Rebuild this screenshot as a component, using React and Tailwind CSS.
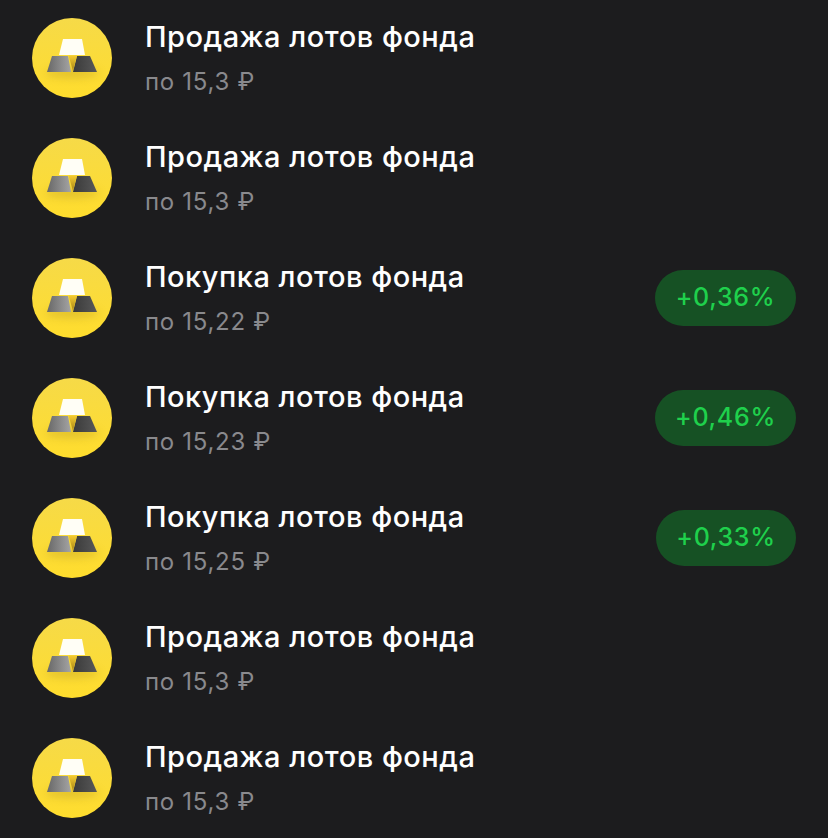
const rows = [
  { title: "Продажа лотов фонда", price: "по 15,3 ₽" },
  { title: "Продажа лотов фонда", price: "по 15,3 ₽" },
  { title: "Покупка лотов фонда", price: "по 15,22 ₽", badge: "+0,36%" },
  { title: "Покупка лотов фонда", price: "по 15,23 ₽", badge: "+0,46%" },
  { title: "Покупка лотов фонда", price: "по 15,25 ₽", badge: "+0,33%", narrow: true },
  { title: "Продажа лотов фонда", price: "по 15,3 ₽" },
  { title: "Продажа лотов фонда", price: "по 15,3 ₽" },
];

const GoldIcon = () => (
  <svg width="80" height="80" viewBox="0 0 80 80" className="shrink-0">
    <defs>
      <linearGradient id="coin" x1="0" y1="0" x2="0" y2="1">
        <stop offset="0" stopColor="#f6da48" />
        <stop offset="1" stopColor="#ffdd2d" />
      </linearGradient>
      <linearGradient id="barLeft" x1="0" y1="0" x2="1" y2="0">
        <stop offset="0" stopColor="#686868" />
        <stop offset="1" stopColor="#a4a4a4" />
      </linearGradient>
      <linearGradient id="barRight" x1="0" y1="0" x2="1" y2="0">
        <stop offset="0" stopColor="#3a3a3a" />
        <stop offset="1" stopColor="#585858" />
      </linearGradient>
      <linearGradient id="pin" x1="0" y1="0" x2="0" y2="1">
        <stop offset="0" stopColor="#f6cc30" />
        <stop offset="1" stopColor="#a58518" />
      </linearGradient>
      <filter id="soft" x="-30%" y="-80%" width="160%" height="260%">
        <feGaussianBlur stdDeviation="4" />
      </filter>
    </defs>
    <circle cx="40" cy="40" r="40" fill="url(#coin)" />
    <ellipse cx="40" cy="55" rx="27" ry="5" fill="#b8951a" opacity="0.4" filter="url(#soft)" />
    <path d="M31 21H50L53 37H27Z" fill="#fffef6" />
    <path d="M20 38H36L39 54H15Z" fill="url(#barLeft)" />
    <path d="M45 38H58L65 54H41Z" fill="url(#barRight)" />
    <path d="M36.500 37.500H45L41 53Z" fill="url(#pin)" />
  </svg>
);

export default function App() {
  return (
    <div
      className="h-[838px] w-[828px] overflow-hidden bg-[#1c1c1e] pl-[32px] pr-[32px]"
      style={{ fontFamily: "Inter, 'Noto Sans', sans-serif" }}
    >
      <div className="-mt-[2px] flex flex-col">
        {rows.map((row, i) => (
          <div key={i} className="flex h-[120px] items-center">
            <GoldIcon />
            <div className="ml-[33px] flex flex-1 flex-col">
              <div className="mt-[1px] text-[29px] leading-[34px] font-[550] tracking-[0.5px] text-white">{row.title}</div>
              <div className="mt-[13px] text-[24px] leading-[30px] tracking-[0.7px] text-[#89898d]">{row.price}</div>
            </div>
            {row.badge && (
              <div
                className={`flex h-[56px] items-center justify-center rounded-full bg-[#165124] text-[25px] font-[550] tracking-[0.7px] text-[#1fd04c] ${row.narrow ? "w-[140px]" : "w-[141px]"}`}
              >
                {row.badge}
              </div>
            )}
          </div>
        ))}
      </div>
    </div>
  );
}
